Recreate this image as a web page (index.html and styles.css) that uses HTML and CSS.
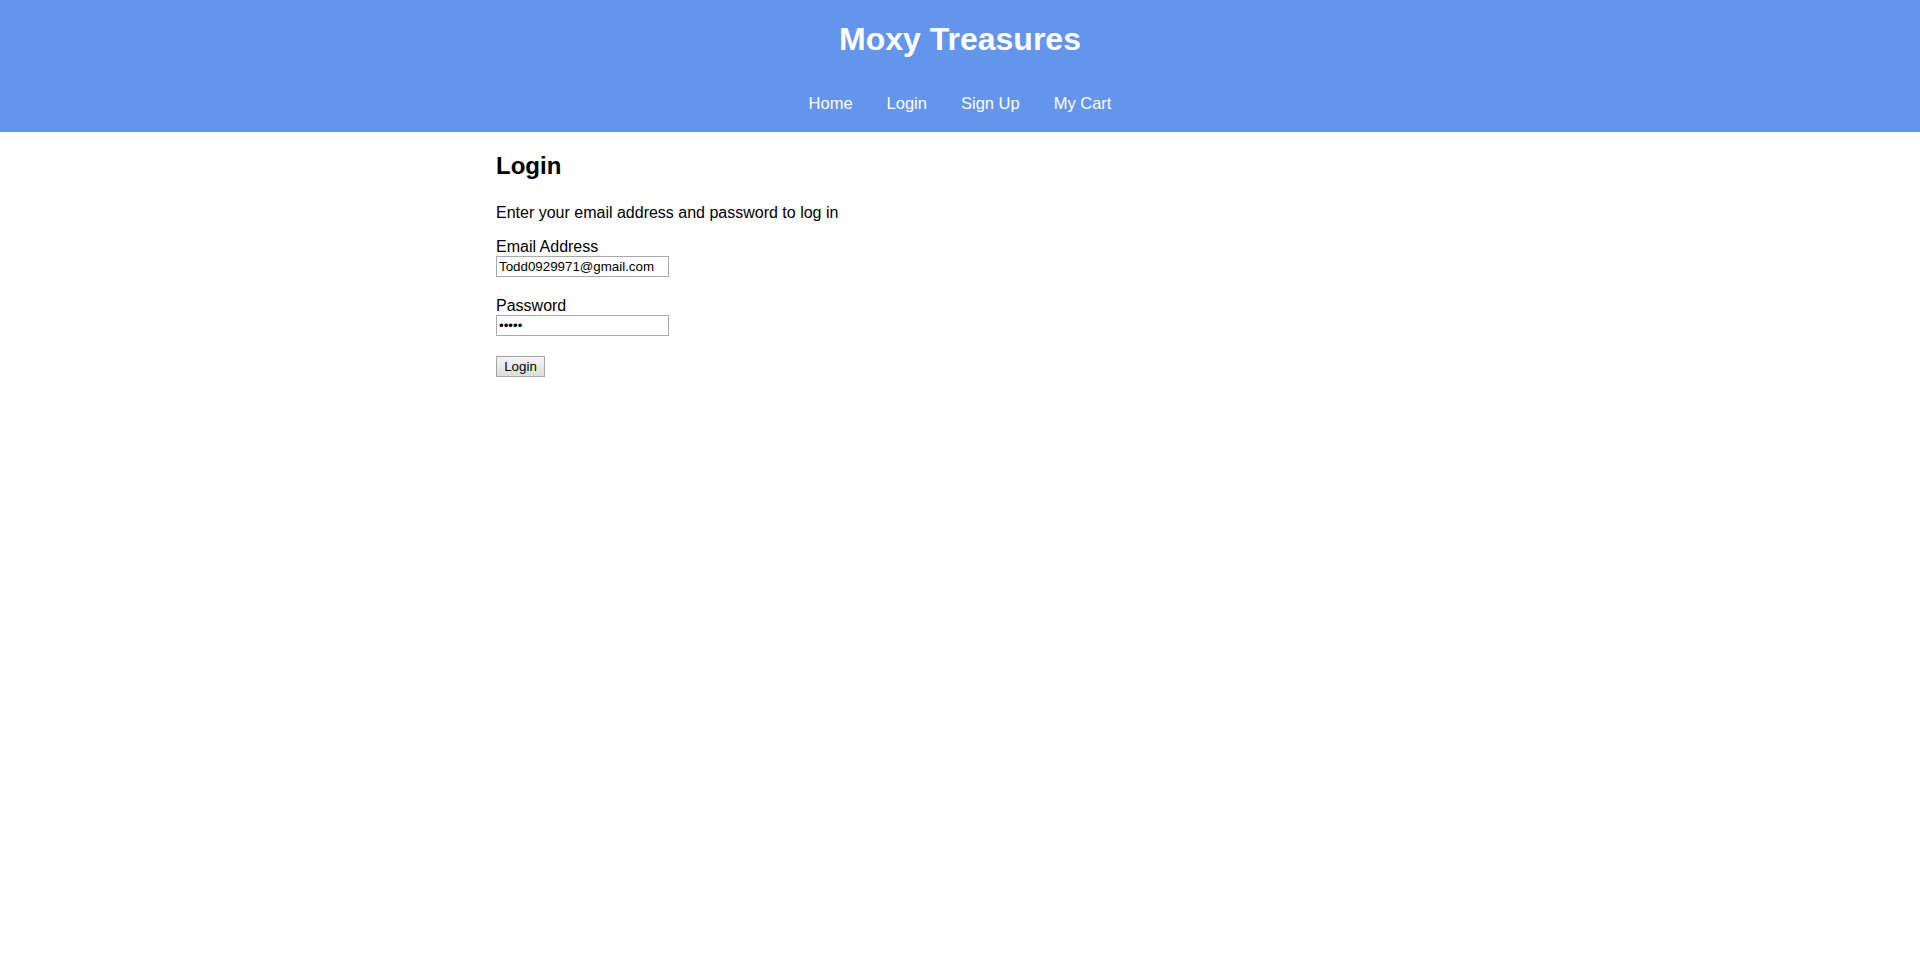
FILE: index.html
```html
<!DOCTYPE html>
<html lang="en">
<head>
<meta charset="utf-8">
<title>Moxy Treasures - Login</title>
<link rel="stylesheet" href="styles.css">
</head>
<body>
<header class="site-header">
  <h1 class="site-title">Moxy Treasures</h1>
  <nav class="site-nav">
    <a href="#">Home</a>
    <a href="#">Login</a>
    <a href="#">Sign Up</a>
    <a href="#">My Cart</a>
  </nav>
</header>
<main class="content">
  <h2 class="page-title">Login</h2>
  <p class="intro">Enter your email address and password to log in</p>
  <form class="login-form">
    <div class="field">
      <label for="email">Email Address</label>
      <input id="email" type="text" value="Todd0929971@gmail.com">
    </div>
    <div class="field">
      <label for="password">Password</label>
      <input id="password" type="password" value="12345">
    </div>
    <button type="button" class="btn">Login</button>
  </form>
</main>
</body>
</html>
```
FILE: styles.css
```css
html, body {
  margin: 0;
  padding: 0;
  background: #ffffff;
}
body {
  font-family: "Liberation Sans", Arial, sans-serif;
  color: #000;
}
.site-header {
  background: #6495ed;
  padding: 21px 0 20px;
  text-align: center;
}
.site-title {
  margin: 0;
  font-size: 32px;
  line-height: 37px;
  font-weight: bold;
  color: #ffffff;
}
.site-nav {
  margin-top: 36px;
  display: flex;
  justify-content: center;
  gap: 34px;
  font-size: 16.5px;
  line-height: 18px;
}
.site-nav a {
  color: #ffffff;
  text-decoration: none;
}
.content {
  width: 928px;
  margin: 0 auto;
}
.page-title {
  margin: 20px 0 0;
  font-size: 24px;
  line-height: 28px;
  font-weight: bold;
}
.intro {
  margin: 24px 0 16px;
  font-size: 16px;
  line-height: 18px;
}
.login-form {
  display: flex;
  flex-direction: column;
  align-items: flex-start;
}
.field {
  display: flex;
  flex-direction: column;
  align-items: flex-start;
  margin-bottom: 20px;
}
.field label {
  font-size: 16px;
  line-height: 18px;
}
.field input {
  box-sizing: border-box;
  width: 173px;
  height: 21px;
  margin: 0;
  padding: 1px 2px;
  border: 1px solid #a9a9a9;
  border-radius: 0;
  font-family: "Liberation Sans", Arial, sans-serif;
  font-size: 13.33px;
  color: #000;
  background: #fff;
  outline: none;
}
.btn {
  box-sizing: border-box;
  width: 49px;
  height: 21px;
  margin: 0;
  padding: 0 6px;
  border: 1px solid #a5a5a5;
  border-radius: 0;
  background: linear-gradient(#f4f4f4, #dedede);
  font-family: "Liberation Sans", Arial, sans-serif;
  font-size: 13.33px;
  color: #000;
}
```
